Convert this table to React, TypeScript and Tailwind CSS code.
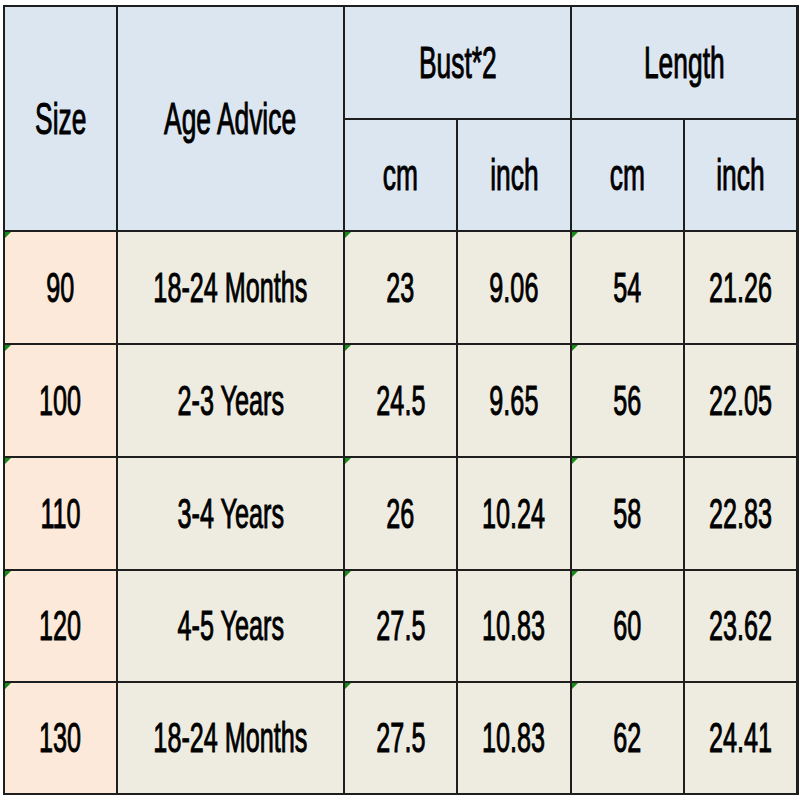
const rows = [
  ["90", "18-24 Months", "23", "9.06", "54", "21.26"],
  ["100", "2-3 Years", "24.5", "9.65", "56", "22.05"],
  ["110", "3-4 Years", "26", "10.24", "58", "22.83"],
  ["120", "4-5 Years", "27.5", "10.83", "60", "23.62"],
  ["130", "18-24 Months", "27.5", "10.83", "62", "24.41"],
];

const Cell = ({
  text,
  bg,
  flag,
  head,
  className = "",
}: {
  text: string;
  bg: string;
  flag?: boolean;
  head?: boolean;
  className?: string;
}) => (
  <div className={`relative flex items-center justify-center ${bg} ${className}`}>
    {flag && (
      <div className="absolute left-0 top-0 h-0 w-0 border-r-[6px] border-t-[6px] border-r-transparent border-t-[#188a18]" />
    )}
    <span
      className={`inline-block scale-x-[0.6] whitespace-nowrap leading-none text-black [-webkit-text-stroke:1px_#000] ${
        head ? "text-[44px]" : "text-[42px]"
      }`}
    >
      {text}
    </span>
  </div>
);

export default function App() {
  const head = "bg-[#dce6f1]";
  return (
    <div className="h-[800px] w-[800px] bg-white pl-[3px] pt-[5px]" style={{ fontFamily: '"Liberation Sans", Arial, sans-serif' }}>
      <div className="grid w-[796px] grid-cols-[111px_225px_111px_112px_111px_111px] grid-rows-[111px_110px_111px_111px_111px_110px_110px] gap-[2px] bg-[#1e1e1e] p-[2px]">
        <Cell text="Size" bg={head} head className="row-span-2" />
        <Cell text="Age Advice" bg={head} head className="row-span-2" />
        <Cell text="Bust*2" bg={head} head className="col-span-2" />
        <Cell text="Length" bg={head} head className="col-span-2" />
        <Cell text="cm" bg={head} head />
        <Cell text="inch" bg={head} head />
        <Cell text="cm" bg={head} head />
        <Cell text="inch" bg={head} head />
        {rows.map((r, i) =>
          r.map((t, j) => (
            <Cell
              key={`${i}-${j}`}
              text={t}
              bg={j === 0 ? "bg-[#fde9d9]" : "bg-[#eeece1]"}
              flag={j === 0 || j === 2 || j === 4}
            />
          ))
        )}
      </div>
    </div>
  );
}
